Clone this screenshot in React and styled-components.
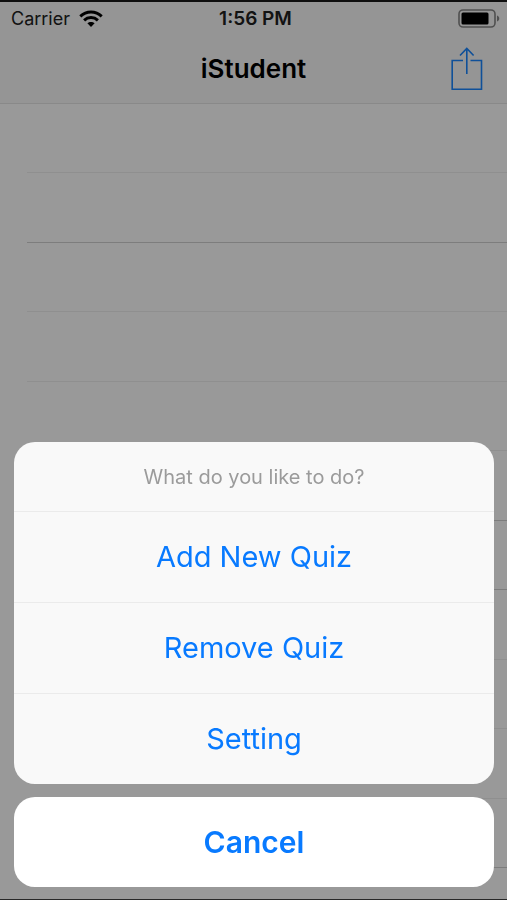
import React from "react";
import styled, { createGlobalStyle, css } from "styled-components";

const GlobalStyle = createGlobalStyle`
  *, *::before, *::after { box-sizing: border-box; }
  body {
    margin: 0;
    background: #ffffff;
    font-family: Inter, "Liberation Sans", sans-serif;
  }
`;

const Screen = styled.div`
  display: flex;
  flex-direction: column;
  min-height: 100vh;
  border-top: 2px solid #1a1a1a;
  border-bottom: 1px solid #444444;
`;

const TopArea = styled.header`
  background: #f8f8f8;
  border-bottom: 1px solid #e4e4e4;
`;

const StatusBar = styled.div`
  display: grid;
  grid-template-columns: 1fr auto 1fr;
  align-items: center;
  height: 33px;
  padding: 0 7px 0 11px;
  font-size: 18px;
  line-height: 24px;
  color: #202020;
`;

const Carrier = styled.div`
  display: flex;
  align-items: center;
  gap: 9px;
`;

const Clock = styled.time`
  font-size: 19px;
  font-weight: 600;
`;

const BatteryIcon = styled.svg`
  justify-self: end;
`;

const NavBar = styled.nav`
  display: grid;
  grid-template-columns: 1fr auto 1fr;
  align-items: center;
  height: 68px;
  padding: 0 23px;
`;

const Title = styled.h1`
  grid-column: 2;
  margin: 0;
  font-size: 26px;
  line-height: 32px;
  font-weight: 600;
  color: #000000;
`;

const ShareButton = styled.button`
  justify-self: end;
  display: flex;
  padding: 0;
  border: 0;
  background: none;
  color: #1a85ff;
`;

const QuizList = styled.ul`
  flex: 1;
  display: flex;
  flex-direction: column;
  margin: 0;
  padding: 0 0 31px 27px;
  list-style: none;
`;

const QuizRow = styled.li`
  flex: 1;
  border-bottom: 1px solid ${({ $strong }) => ($strong ? "#d0d0d0" : "#efefef")};
`;

const Backdrop = styled.div`
  position: fixed;
  inset: 0;
  display: flex;
  flex-direction: column;
  justify-content: flex-end;
  gap: 13px;
  padding: 13px 13px 13px 14px;
  background: rgba(0, 0, 0, 0.4);
`;

const panel = css`
  border-radius: 21px;
  overflow: hidden;
`;

const ActionSheet = styled.section`
  ${panel}
  background: #f9f9f9;
`;

const Prompt = styled.h2`
  margin: 0;
  padding: 23px 16px 21px;
  font-size: 20px;
  line-height: 25px;
  font-weight: 400;
  text-align: center;
  color: #9b9b9b;
`;

const SheetButton = styled.button`
  display: block;
  width: 100%;
  height: 90px;
  padding: 0;
  border: 0;
  font-family: inherit;
  font-size: 30px;
  line-height: 36px;
  font-weight: 600;
  color: #087aff;
  background: transparent;
`;

const ActionButton = styled(SheetButton)`
  height: 91px;
  border-top: 1px solid #ebebeb;
  font-size: 29px;
  font-weight: 400;
`;

const CancelButton = styled(SheetButton)`
  ${panel}
  background: #ffffff;
`;

const actions = ["Add New Quiz", "Remove Quiz", "Setting"];
const strongRows = [1, 5, 6, 10];

function Wifi() {
  return (
    <svg width="24" height="18" viewBox="0 0 24 18" aria-label="Wi-Fi" role="img">
      <g fill="none" stroke="#000000" strokeWidth="3">
        <path d="M1.3 6.3C7.3 .6 16.7 .6 22.7 6.3" />
        <path d="M5.1 10.3C9 6.7 15 6.7 18.9 10.3" />
      </g>
      <path d="M12 17L8.4 13.3C10.4 11.4 13.6 11.4 15.6 13.3Z" fill="#000000" />
    </svg>
  );
}

function Battery() {
  return (
    <BatteryIcon width="42" height="19" viewBox="0 0 42 19" aria-label="Battery" role="img">
      <rect x="1" y="1" width="36" height="17" rx="4" fill="none" stroke="#858585" strokeWidth="1.6" />
      <rect x="3.5" y="3.5" width="27" height="12" rx="1.5" fill="#000000" />
      <path d="M39 6.5C42 7.5 42 11.5 39 12.5Z" fill="#858585" />
    </BatteryIcon>
  );
}

function ShareIcon() {
  return (
    <svg width="34" height="44" viewBox="0 0 34 44" fill="none" stroke="currentColor" strokeWidth="1.6">
      <path d="M13 13.5H2.2V42.2H31.5V13.5H20.5M16.8 27V1.5M10 8.5L16.8 1.5L23.6 8.5" />
    </svg>
  );
}

export default function App() {
  return (
    <>
      <GlobalStyle />
      <Screen>
        <TopArea>
          <StatusBar>
            <Carrier>
              Carrier
              <Wifi />
            </Carrier>
            <Clock>1:56 PM</Clock>
            <Battery />
          </StatusBar>
          <NavBar>
            <Title>iStudent</Title>
            <ShareButton type="button" aria-label="Share">
              <ShareIcon />
            </ShareButton>
          </NavBar>
        </TopArea>
        <QuizList>
          {Array.from({ length: 11 }, (_, i) => (
            <QuizRow key={i} $strong={strongRows.includes(i)} />
          ))}
        </QuizList>
      </Screen>
      <Backdrop role="dialog" aria-modal="true" aria-labelledby="prompt">
        <ActionSheet>
          <Prompt id="prompt">What do you like to do?</Prompt>
          {actions.map((label) => (
            <ActionButton key={label} type="button">{label}</ActionButton>
          ))}
        </ActionSheet>
        <CancelButton type="button">Cancel</CancelButton>
      </Backdrop>
    </>
  );
}
